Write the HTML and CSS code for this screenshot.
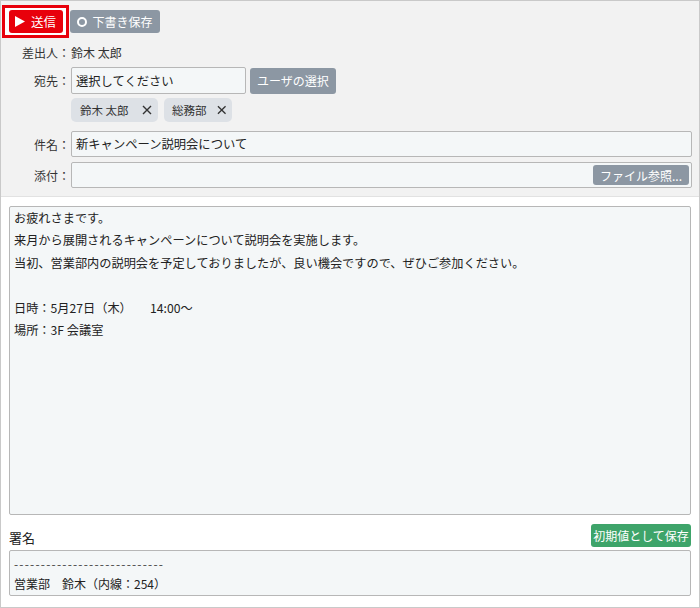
FILE: index.html
```html
<!DOCTYPE html>
<html lang="ja">
<head>
<meta charset="utf-8">
<link rel="stylesheet" href="styles.css">
</head>
<body>
<div class="frame">
  <div class="head">
    <div class="toolbar">
      <span class="highlight"><button class="btn btn-send"><svg class="tri" width="10" height="11" viewBox="0 0 10 11"><path d="M0 0 L10 5.5 L0 11 Z" fill="#fff"/></svg>送信</button></span>
      <button class="btn btn-gray btn-draft"><span class="ring"></span>下書き保存</button>
    </div>
    <div class="row row-from">
      <span class="label">差出人：</span><span class="value">鈴木 太郎</span>
    </div>
    <div class="row row-to">
      <span class="label">宛先：</span>
      <div class="field field-to">選択してください</div>
      <button class="btn btn-gray btn-user">ユーザの選択</button>
    </div>
    <div class="row row-tags">
      <span class="label"></span>
      <div class="tags">
        <span class="tag tag-1">鈴木 太郎<svg class="x" width="10" height="10" viewBox="0 0 10 10"><path d="M1 1 L9 9 M9 1 L1 9" stroke="#333" stroke-width="1.4"/></svg></span>
        <span class="tag tag-2">総務部<svg class="x" width="10" height="10" viewBox="0 0 10 10"><path d="M1 1 L9 9 M9 1 L1 9" stroke="#333" stroke-width="1.4"/></svg></span>
      </div>
    </div>
    <div class="row row-subject">
      <span class="label">件名：</span>
      <div class="field field-wide">新キャンペーン説明会について</div>
    </div>
    <div class="row row-attach">
      <span class="label">添付：</span>
      <div class="field field-wide field-attach"><button class="btn btn-gray btn-file">ファイル参照...</button></div>
    </div>
  </div>
  <div class="main">
    <div class="body-text">お疲れさまです。<br>来月から展開されるキャンペーンについて説明会を実施します。<br>当初、営業部内の説明会を予定しておりましたが、良い機会ですので、ぜひご参加ください。<br><br>日時：5月27日（木）　　14:00～<br>場所：3F 会議室</div>
    <div class="sig-head">
      <span class="sig-label">署名</span>
      <button class="btn btn-green">初期値として保存</button>
    </div>
    <div class="sig-text"><span class="dashes">----------------------------</span><br>営業部　鈴木（内線：254）</div>
  </div>
</div>
</body>
</html>
```
FILE: styles.css
```css
* { box-sizing: border-box; }
html, body { margin: 0; padding: 0; background: #fff; }
body {
  font-family: "Noto Sans CJK JP", "Noto Sans", sans-serif;
  font-size: 12px;
  color: #333;
}
.frame {
  width: 700px;
  height: 608px;
  border: 1px solid #c9c9c9;
  display: flex;
  flex-direction: column;
}
.head {
  background: #f2f2f2;
  border-bottom: 1px solid #e2e2e2;
  padding: 4px 0 8px 1px;
}
.toolbar {
  display: flex;
  align-items: center;
  height: 33px;
}
.highlight {
  display: flex;
  align-items: center;
  justify-content: center;
  width: 67px;
  height: 33px;
  border: 3px solid #e8000b;
  background: #fff;
}
.btn {
  font-family: inherit;
  font-size: 12px;
  border: none;
  border-radius: 3px;
  color: #fff;
  padding: 0 6px;
  display: inline-flex;
  align-items: center;
  justify-content: center;
  white-space: nowrap;
  flex: none;
  cursor: pointer;
}
.btn-send {
  background: #e8000b;
  width: 54px;
  height: 23px;
  font-size: 12.5px;
}
.tri { margin-right: 6px; }
.btn-gray { background: #8c97a3; }
.btn-draft {
  margin-left: 1px;
  width: 90px;
  height: 23px;
}
.ring {
  width: 10px;
  height: 10px;
  border: 2px solid #fff;
  border-radius: 50%;
  margin-right: 5px;
}
.row {
  display: flex;
  align-items: center;
}
.label {
  width: 69px;
  flex: none;
  text-align: right;
  padding-right: 1px;
}
.row-from { height: 20px; margin-top: 4px; }
.row-to { height: 27px; margin-top: 5px; }
.row-tags { height: 24px; margin-top: 4px; }
.row-subject { height: 26px; margin-top: 9px; }
.row-attach { height: 26px; margin-top: 5px; }
.field {
  height: 100%;
  background: #f4f7f8;
  border: 1px solid #b7b7b7;
  border-radius: 2px;
  display: flex;
  align-items: center;
  padding: 0 4px;
  font-size: 12.3px;
  color: #222;
}
.field-to { width: 175px; }
.field-wide { width: 621px; }
.field-attach { justify-content: flex-end; padding-right: 2px; }
.btn-user {
  margin-left: 4px;
  width: 86px;
  height: 26px;
}
.btn-file {
  width: 96px;
  height: 20px;
  padding: 0 4px;
}
.tags { display: flex; gap: 6px; height: 100%; }
.tag {
  background: #dde1e6;
  border-radius: 5px;
  height: 24px;
  display: inline-flex;
  align-items: center;
  justify-content: space-between;
  padding: 0 6px 0 9px;
  font-size: 11.5px;
  color: #333;
  white-space: nowrap;
  flex: none;
}
.tag .x { margin-left: 10px; }
.tag-1 { width: 87px; }
.tag-2 { width: 68px; padding-left: 8px; }
.main {
  flex: 1;
  padding: 9px 8px 0 8px;
  display: flex;
  flex-direction: column;
}
.body-text {
  height: 309px;
  background: #f4f7f8;
  border: 1px solid #b7b7b7;
  border-radius: 2px;
  padding: 0 4px;
  line-height: 22.4px;
  font-size: 12.2px;
  color: #222;
}
.sig-head {
  display: flex;
  justify-content: space-between;
  align-items: flex-end;
  height: 35px;
}
.sig-label {
  font-size: 13px;
  color: #222;
  line-height: 20px;
  margin-bottom: 2px;
}
.btn-green {
  background: #3ea46a;
  width: 100px;
  height: 23px;
  margin-bottom: 3px;
  padding: 0 3px;
}
.sig-text {
  height: 46px;
  background: #f4f7f8;
  border: 1px solid #b7b7b7;
  border-radius: 2px;
  padding: 3px 4px 0;
  line-height: 20px;
  color: #222;
}
.dashes { letter-spacing: 1.2px; color: #444; }
```
